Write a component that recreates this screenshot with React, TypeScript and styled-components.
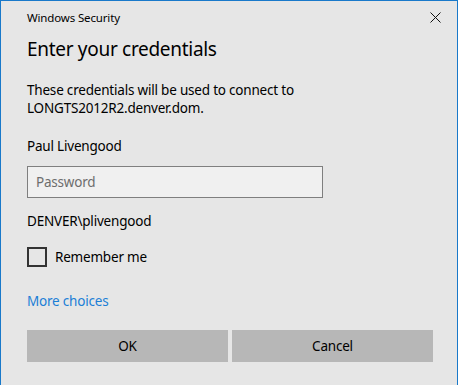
import styled, { createGlobalStyle } from 'styled-components'

const GlobalStyle = createGlobalStyle`
  html, body {
    margin: 0;
    padding: 0;
    background: #e6e6e6;
  }
  * {
    box-sizing: border-box;
  }
`

const Window = styled.div`
  width: 458px;
  height: 385px;
  display: flex;
  flex-direction: column;
  background: #e6e6e6;
  border: 1px solid #1979ca;
  border-bottom: none;
  font-family: 'Noto Sans', 'Open Sans', sans-serif;
  color: #000;
  overflow: hidden;
`

const TitleBar = styled.div`
  height: 33px;
  display: flex;
  align-items: center;
  justify-content: space-between;
  padding: 0 10px 0 26px;
  font-size: 11.5px;
  letter-spacing: -0.15px;
`

const CloseButton = styled.button`
  width: 24px;
  height: 24px;
  border: none;
  background: transparent;
  padding: 0;
  display: flex;
  align-items: center;
  justify-content: center;
`

const Content = styled.div`
  display: flex;
  flex-direction: column;
  padding: 0 24px 0 26px;
`

const Heading = styled.h1`
  margin: 0;
  font-size: 19px;
  letter-spacing: -0.3px;
  font-weight: 400;
  line-height: 30px;
`

const Text = styled.p<{ $top: number }>`
  margin: ${p => p.$top}px 0 0;
  font-size: 13.5px;
  letter-spacing: -0.2px;
  line-height: 18px;
`

const PasswordInput = styled.input`
  margin-top: 11px;
  width: 296px;
  height: 32px;
  border: 1px solid #7f7f7f;
  background: #f0f0f0;
  padding: 0 8px;
  font-family: inherit;
  font-size: 13.5px;
  letter-spacing: -0.2px;
  outline: none;
  &::placeholder {
    color: #6d6d6d;
  }
`

const CheckRow = styled.label`
  margin-top: 17px;
  display: flex;
  align-items: center;
  gap: 8px;
  font-size: 13.5px;
  letter-spacing: -0.2px;
  line-height: 20px;
`

const CheckBox = styled.span`
  width: 20px;
  height: 20px;
  border: 2px solid #333;
  display: inline-block;
`

const Link = styled.a`
  margin-top: 25px;
  font-size: 13.5px;
  letter-spacing: -0.2px;
  line-height: 18px;
  color: #1c7fd6;
  text-decoration: none;
`

const ButtonRow = styled.div`
  margin-top: 20px;
  display: grid;
  grid-template-columns: 201px 201px;
  gap: 4px;
`

const Button = styled.button`
  height: 32px;
  border: none;
  background: #b7b7b7;
  font-family: inherit;
  font-size: 13.5px;
  letter-spacing: -0.2px;
  color: #000;
`

export default function App() {
  return (
    <>
      <GlobalStyle />
      <Window>
        <TitleBar>
          <span>Windows Security</span>
          <CloseButton aria-label="Close">
            <svg width="11" height="11" viewBox="0 0 11 11">
              <path d="M0.5 0.5 L10.5 10.5 M10.5 0.5 L0.5 10.5" stroke="#111" strokeWidth="1" />
            </svg>
          </CloseButton>
        </TitleBar>
        <Content>
          <Heading>Enter your credentials</Heading>
          <Text $top={17}>
            These credentials will be used to connect to
            <br />
            LONGTS2012R2.denver.dom.
          </Text>
          <Text $top={20}>Paul Livengood</Text>
          <PasswordInput type="password" placeholder="Password" />
          <Text $top={14}>DENVER\plivengood</Text>
          <CheckRow>
            <CheckBox />
            Remember me
          </CheckRow>
          <Link href="#">More choices</Link>
          <ButtonRow>
            <Button>OK</Button>
            <Button>Cancel</Button>
          </ButtonRow>
        </Content>
      </Window>
    </>
  )
}
